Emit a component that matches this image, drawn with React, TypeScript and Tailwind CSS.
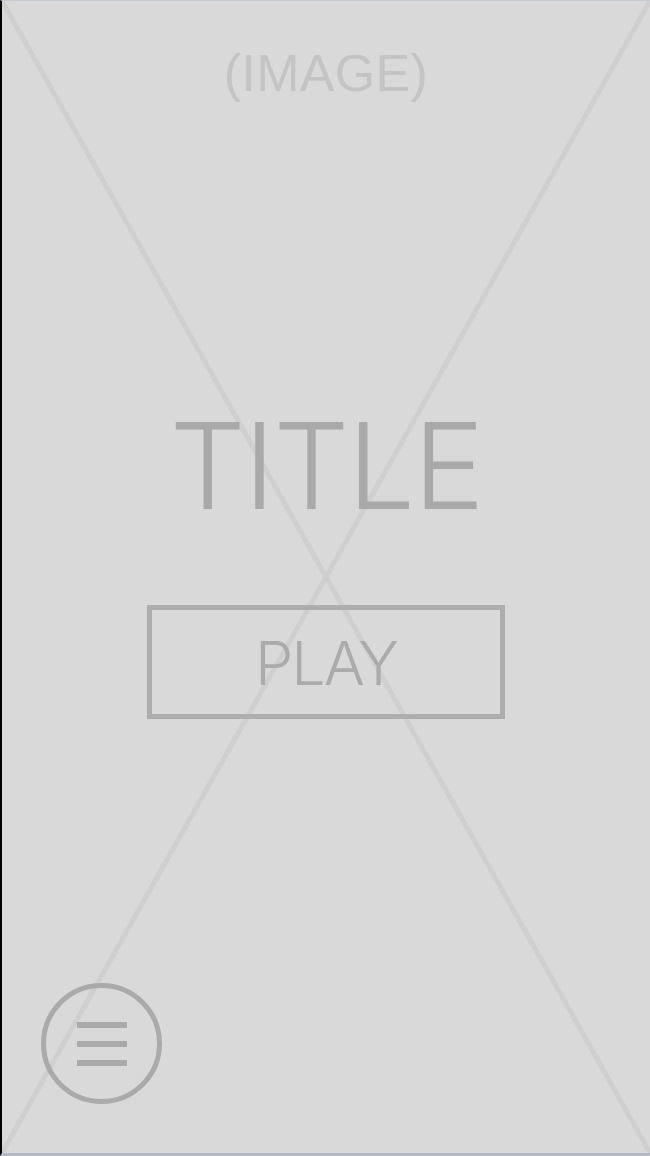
import React from "react";

export default function App() {
  return (
    <div className="w-[650px] h-[1156px] bg-[#d9d9d9] border-l-2 border-l-black border-t border-t-[#c3c7ce] border-b-[3px] border-b-[#b5b9c0] overflow-hidden">
      <div className="relative w-full h-full flex flex-col items-center">
        <svg
          className="absolute inset-0 w-full h-full pointer-events-none"
          viewBox="0 0 648 1152"
          preserveAspectRatio="none"
        >
          <line x1="0" y1="0" x2="648" y2="1152" stroke="#cfcfcf" strokeWidth="5" />
          <line x1="648" y1="0" x2="0" y2="1152" stroke="#cfcfcf" strokeWidth="5" />
        </svg>

        <p className="relative mt-[46px] text-[52px] leading-none text-[#c4c4c4] font-['Liberation_Sans',Arial,sans-serif] tracking-[0.3px]">
          (IMAGE)
        </p>

        <h1 className="relative mt-[307px] text-[120px] leading-none font-light text-[#a9a9a9] font-['Inter','Helvetica_Neue',sans-serif] tracking-[-2px]">
          TITLE
        </h1>

        <button className="relative mt-[79px] w-[358px] h-[114px] border-[5px] border-[#adadad] flex items-center justify-center">
          <span className="mt-[2px] text-[61px] leading-none font-light text-[#ababab] font-['Inter','Helvetica_Neue',sans-serif] tracking-[-2px]">
            PLAY
          </span>
        </button>

        <button className="relative self-start ml-[39px] mt-[264px] w-[121px] h-[121px] rounded-full border-[5px] border-[#aaaaaa] flex flex-col items-center justify-center gap-[13px]">
          <span className="block w-[50px] h-[6px] bg-[#aaaaaa]" />
          <span className="block w-[50px] h-[6px] bg-[#aaaaaa]" />
          <span className="block w-[50px] h-[6px] bg-[#aaaaaa]" />
        </button>
      </div>
    </div>
  );
}
